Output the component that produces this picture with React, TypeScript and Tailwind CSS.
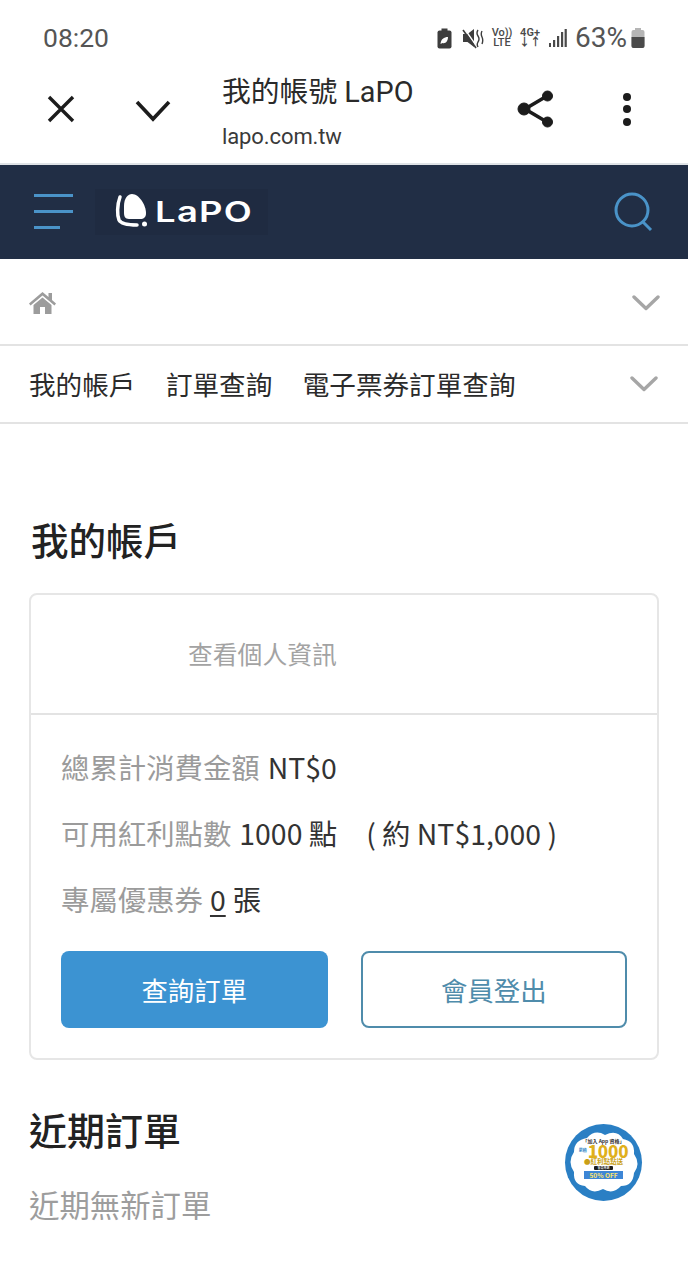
import React from "react";

const font = "font-['Roboto','Noto_Sans_CJK_TC',sans-serif]";
const cjk = "font-['Noto_Sans_CJK_TC','Noto_Sans',sans-serif]";

function Chevron() {
  return (
    <svg width="28" height="18" viewBox="0 0 28 18" fill="none">
      <path d="M2 3 L14 14.5 L26 3" stroke="#a6a6a6" strokeWidth="3.4" strokeLinecap="round" strokeLinejoin="round" />
    </svg>
  );
}

function StatusIcons() {
  return (
    <div className="flex items-center text-[#4a4a4a]">
      <svg width="15" height="21" viewBox="0 0 15 21">
        <rect x="0.5" y="2.5" width="14" height="18" rx="2" fill="#3d3d3d" />
        <rect x="4.5" y="0.5" width="6" height="3" fill="#3d3d3d" />
        <path d="M3.5 16 C4 11 7 9 11 9 C11 13 8.5 16 5.5 15 Z" fill="#fff" />
      </svg>
      <svg width="22" height="22" viewBox="0 0 22 22" className="ml-[10px]">
        <path d="M1 7 H5.5 L12 2 V20 L5.5 15 H1 Z" fill="#3d3d3d" />
        <path d="M2 1 L15 20" stroke="#fff" strokeWidth="1.4" />
        <path d="M1 3 L14 21" stroke="#3d3d3d" strokeWidth="1.6" />
        <path d="M16 3 Q14 6 16 9 Q18 12 16 15 Q14.5 17.5 16 20 M20 4 Q18.5 7 20 10 Q21.5 13 20 17" stroke="#3d3d3d" strokeWidth="1.4" fill="none" />
      </svg>
      <div className={`ml-[8px] flex w-[20px] flex-col items-center text-[11px] leading-[10.5px] font-medium ${font}`}>
        <span>Vo))</span>
        <span>LTE</span>
      </div>
      <div className={`ml-[8px] flex w-[20px] flex-col items-center text-[11px] leading-[10.5px] font-semibold ${font}`}>
        <span>4G+</span>
        <span>↓↑</span>
      </div>
      <svg width="19" height="22" viewBox="0 0 19 22" fill="#4a4a4a" className="ml-[8px]">
        <rect x="1" y="16" width="2" height="4" />
        <rect x="5" y="13" width="2.2" height="7" />
        <rect x="9" y="9" width="2.2" height="11" />
        <rect x="13" y="5" width="2.2" height="15" />
        <rect x="16.6" y="2" width="2.2" height="18" />
      </svg>
      <span className={`ml-[8px] text-[28px] leading-none text-[#555] ${font}`}>63%</span>
      <svg width="14" height="21" viewBox="0 0 14 21" className="ml-[4px]">
        <rect x="4" y="0" width="6" height="3" fill="#b5b5b5" />
        <rect x="0.5" y="2" width="13" height="18" rx="2" fill="#b5b5b5" />
        <path d="M0.5 9 H13.5 V18 a2 2 0 0 1 -2 2 H2.5 a2 2 0 0 1 -2 -2 Z" fill="#4a4a4a" />
      </svg>
    </div>
  );
}

function Browser() {
  return (
    <div className="flex h-[100px] items-start border-b-2 border-[#dfe3e6] bg-white">
      <div className="flex w-[122px] items-center pt-[30px] pl-[47px]">
        <svg width="28" height="28" viewBox="0 0 28 28" fill="none">
          <path d="M2 2 L26 26 M26 2 L2 26" stroke="#1c1c1c" strokeWidth="3.4" />
        </svg>
      </div>
      <div className="flex w-[100px] items-center pt-[35px] pl-[13px]">
        <svg width="36" height="22" viewBox="0 0 36 22" fill="none">
          <path d="M2 2 L18 19 L34 2" stroke="#1c1c1c" strokeWidth="3.6" />
        </svg>
      </div>
      <div className={`flex flex-1 flex-col ${font}`}>
        <span className="pt-[9px] text-[28.8px] leading-[36px] text-[#2a2a2a]">我的帳號 LaPO</span>
        <span className="pt-[13px] text-[22px] leading-[28px] tracking-[-0.1px] text-[#3a3a3a]">lapo.com.tw</span>
      </div>
      <div className="flex items-center pt-[23px] pr-[57px]">
        <svg width="38" height="42" viewBox="0 0 38 42" fill="#1c1c1c" stroke="#1c1c1c">
          <path d="M30 8 L8 21 L30 34" fill="none" strokeWidth="3.6" />
          <circle cx="7" cy="21" r="6" />
          <circle cx="30.5" cy="8" r="5" />
          <circle cx="30.5" cy="34" r="5" />
        </svg>
        <div className="ml-[68px] flex flex-col gap-[4.5px]">
          <div className="h-[8px] w-[8px] rounded-full bg-[#1c1c1c]" />
          <div className="h-[8px] w-[8px] rounded-full bg-[#1c1c1c]" />
          <div className="h-[8px] w-[8px] rounded-full bg-[#1c1c1c]" />
        </div>
      </div>
    </div>
  );
}

function Header() {
  return (
    <div className="flex h-[94px] items-center bg-[#212e45] pr-[36px] pl-[34px]">
      <div className="flex w-[39px] flex-col gap-[13px] pb-[2px]">
        <div className="h-[3px] w-[39px] bg-[#4a93c8]" />
        <div className="h-[3px] w-[39px] bg-[#4a93c8]" />
        <div className="h-[3px] w-[26px] bg-[#4a93c8]" />
      </div>
      <div className="ml-[22px] flex h-[46px] w-[173px] items-center gap-[6px] bg-[#1f2b41] pl-[20px]">
        <svg width="34" height="34" viewBox="0 0 34 34" fill="none" className="-mt-[5px]">
          <path d="M5 4 C2 12 2 22 4 27 C6 31 12 32 22 32" stroke="#fff" strokeWidth="3.5" strokeLinecap="round" />
          <path d="M9 13 C9 5 13 1 17 1 C24 1 31 12 31 20 C31 24 29 26 25 26 H14 C10 26 9 23 9 20 Z" fill="#fff" />
          <circle cx="29.5" cy="31" r="2.5" fill="#fff" />
        </svg>
        <span className="origin-left scale-x-[1.3] font-['Inter',sans-serif] text-[28px] leading-none font-semibold tracking-[1px] text-white">
          LaPO
        </span>
      </div>
      <div className="flex-1" />
      <svg width="40" height="40" viewBox="0 0 40 40" fill="none" className="-mr-[2px]">
        <circle cx="18" cy="18" r="16" stroke="#4a93c8" strokeWidth="3" />
        <path d="M28 29 L37 38" stroke="#4a93c8" strokeWidth="3" />
      </svg>
    </div>
  );
}

function Breadcrumb() {
  return (
    <div className="flex h-[87px] items-center justify-between border-b-2 border-[#e3e3e3] pt-[2px] pr-[28px] pl-[29px]">
      <svg width="27" height="24" viewBox="0 0 27 24" fill="#9c9c9c">
        <path d="M13.5 1 L19.5 6 V2 H23 V9 L27 12.5 L25.5 14.5 L13.5 4.5 L1.5 14.5 L0 12.5 Z" />
        <path d="M4.5 14 L13.5 6.5 L22.5 14 V23 H16 V16 H11 V23 H4.5 Z" />
      </svg>
      <Chevron />
    </div>
  );
}

function Nav() {
  return (
    <div className="flex h-[78px] items-center border-b-2 border-[#e3e3e3] pr-[30px] pl-[29px]">
      <div className={`flex gap-[30.5px] text-[26.6px] leading-[40px] whitespace-nowrap text-[#2b2b2b] ${cjk}`}>
        <span>我的帳戶</span>
        <span>訂單查詢</span>
        <span>電子票券訂單查詢</span>
      </div>
      <div className="flex-1" />
      <Chevron />
    </div>
  );
}

function Badge() {
  return (
    <div className="absolute top-[1124px] left-[565px] h-[77px] w-[77px] overflow-hidden rounded-full bg-[#2a7fc4]">
      <svg width="77" height="77" viewBox="0 0 77 77" className="absolute top-0 left-0">
        <path
          d="M22 14 Q30 5 40 11 Q52 5 58 15 Q70 17 69 30 Q76 40 69 49 Q68 62 56 62 Q48 71 38 65 Q27 71 20 62 Q8 61 9 48 Q2 38 9 28 Q9 16 22 14 Z"
          fill="#fff"
        />
      </svg>
      <div className={`absolute top-[13px] left-0 flex w-full flex-col items-center ${cjk}`}>
        <span className="text-[5px] leading-[7px] font-bold whitespace-nowrap text-[#333]">「加入 App 資格」</span>
        <div className="flex h-[13px] items-center">
          <span className="mr-[1px] text-[4px] leading-[4.5px] font-bold text-[#2a7fc4]">累積</span>
          <span className="text-[17px] leading-[13px] font-extrabold tracking-[-0.2px] text-[#e0b01c]">1000</span>
        </div>
        <span className="text-[6.5px] leading-[8px] font-bold whitespace-nowrap text-[#c99f17]">●紅利點點送</span>
        <span className="mt-[1px] rounded-[1px] bg-[#1d1d1d] px-[3px] text-[3px] leading-[4px] whitespace-nowrap text-white">會員專屬</span>
        <span className="mt-[1px] w-[39px] bg-[#3d86d6] text-center text-[6.5px] leading-[8px] font-bold whitespace-nowrap text-[#ffe36b]">50% OFF</span>
      </div>
    </div>
  );
}

export default function App() {
  return (
    <div className={`relative h-[1280px] w-[688px] overflow-hidden bg-white ${font}`}>
      <div className="flex h-[65px] items-center justify-between pt-[11px] pr-[43px] pl-[43px]">
        <span className="text-[26.5px] leading-none text-[#555]">08:20</span>
        <StatusIcons />
      </div>
      <Browser />
      <Header />
      <Breadcrumb />
      <Nav />
      <main className={`px-[29px] ${cjk}`}>
        <h1 className="mt-[88px] ml-[2px] text-[37.5px] leading-[54px] font-medium text-[#222]">我的帳戶</h1>
        <section className="mt-[27px] h-[467px] rounded-[8px] border-2 border-[#e6e6e6]">
          <div className="flex h-[120px] items-center border-b-2 border-[#e3e3e3] pl-[157px] text-[24.8px] text-[#a3a3a3]">
            查看個人資訊
          </div>
          <div className="px-[30px] pt-[19px]">
            <div className="flex h-[66px] text-[28.4px] leading-[66px] text-[#9b9b9b]">
              <span>總累計消費金額</span>
              <span className="ml-[8px] text-[#333]">NT$0</span>
            </div>
            <div className="flex h-[66px] text-[28.4px] leading-[66px] text-[#9b9b9b]">
              <span>可用紅利點數</span>
              <span className="ml-[8px] text-[#333]">1000 點</span>
              <span className="ml-[29px] text-[#333]">( 約 NT$1,000 )</span>
            </div>
            <div className="flex h-[66px] text-[28.4px] leading-[66px] text-[#9b9b9b]">
              <span>專屬優惠券</span>
              <span className="ml-[7px] text-[#333] underline underline-offset-4">0</span>
              <span className="ml-[7px] text-[#333]">張</span>
            </div>
            <div className="mt-[19px] flex gap-[33px]">
              <button className="flex h-[77px] w-[267px] items-center justify-center rounded-[8px] bg-[#3c93d2] text-[26.4px] text-white">
                查詢訂單
              </button>
              <button className="flex h-[77px] w-[267px] items-center justify-center rounded-[8px] border-2 border-[#4f8cab] bg-white text-[26.4px] text-[#4f8cab]">
                會員登出
              </button>
            </div>
          </div>
        </section>
        <h2 className="mt-[42px] text-[38px] leading-[54px] font-medium text-[#222]">近期訂單</h2>
        <p className="mt-[26px] text-[30.4px] leading-[44px] text-[#9d9d9d]">近期無新訂單</p>
      </main>
      <Badge />
    </div>
  );
}
